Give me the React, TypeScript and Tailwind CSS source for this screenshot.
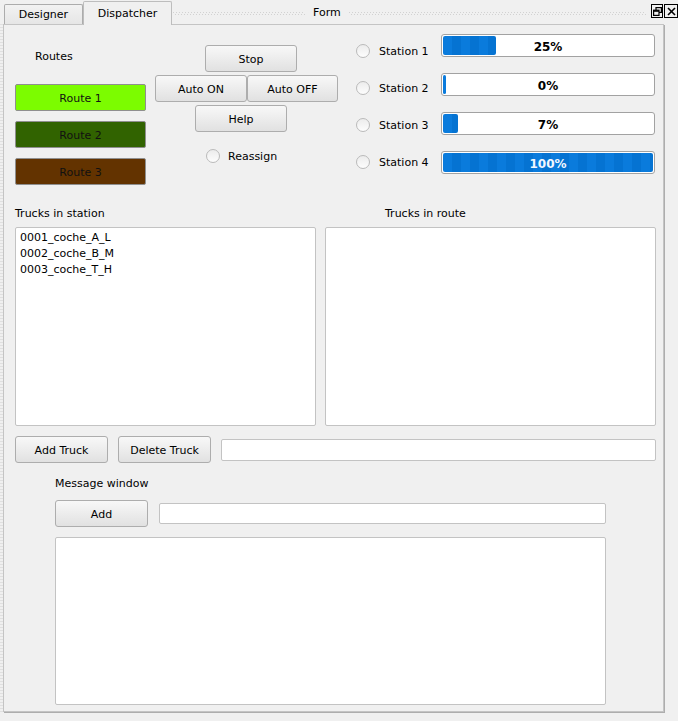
import React from "react";

const btn =
  "flex items-center justify-center pt-[2px] h-[27px] rounded-[3px] border border-[#adadad] bg-linear-to-b from-[#f8f8f8] to-[#e1e1e1] text-black";

const edit = "rounded-[2px] border border-[#c3c3c3] bg-white";

const Radio = () => (
  <span className="inline-block w-[14px] h-[14px] shrink-0 rounded-full border border-[#bababa] bg-linear-to-b from-[#ececec] to-[#fdfdfd]" />
);

const routes = [
  { name: "Route 1", cls: "bg-[#7cfc00]" },
  { name: "Route 2", cls: "bg-[#316300]" },
  { name: "Route 3", cls: "bg-[#633300]" },
];

const stations = [
  { name: "Station 1", pct: 25 },
  { name: "Station 2", pct: 0 },
  { name: "Station 3", pct: 7 },
  { name: "Station 4", pct: 100 },
];

const trucks = ["0001_coche_A_L", "0002_coche_B_M", "0003_coche_T_H"];

const Grip = ({ className }: { className: string }) => (
  <div className={"flex flex-col gap-px " + className}>
    <div className="h-px bg-[repeating-linear-gradient(90deg,#d2d2d2_0px,#d2d2d2_1px,transparent_1px,transparent_3px)]" />
    <div className="h-px bg-[repeating-linear-gradient(90deg,transparent_0px,transparent_2px,#d2d2d2_2px,#d2d2d2_3px)]" />
  </div>
);

const Progress = ({ pct }: { pct: number }) => {
  const w = Math.max(3, Math.round((pct * 210) / 100));
  return (
    <div className="relative w-[214px] h-[23px] rounded-[3px] border border-[#a2a2a2] bg-white p-px">
      <div
        className="h-full rounded-[2px] bg-[repeating-linear-gradient(90deg,#0a7bdc_0px,#0a7bdc_9px,#0573d2_9px,#0573d2_18px)]"
        style={{ width: w }}
      />
      <div
        className={
          "absolute inset-0 flex items-center justify-center pt-[2px] text-[12px] font-bold " +
          (pct === 100 ? "text-[#f2f7ff]" : "text-black")
        }
      >
        {pct}%
      </div>
    </div>
  );
};

export default function App() {
  return (
    <div className="w-[678px] h-[721px] bg-[#f0f0f0] text-black text-[11px] leading-[16px] font-['DejaVu_Sans',sans-serif] overflow-hidden">
      {/* tab bar + dock title */}
      <div className="flex h-[24px] items-end">
        <div className="w-[4px]" />
        <div className="h-[20px] w-[79px] flex items-center justify-center pt-px rounded-t-[2px] border border-b-0 border-[#acacac] bg-linear-to-b from-[#f2f2f2] to-[#e6e6e6]">
          Designer
        </div>
        <div className="relative z-10 -mb-px h-[24px] w-[89px] flex items-center justify-center rounded-t-[2px] border border-b-0 border-[#bdbdbd] bg-[#f0f0f0]">
          Dispatcher
        </div>
        <div className="flex-1 h-full flex items-center pl-[1px] pt-[2px]">
          <Grip className="w-[132px]" />
          <span className="px-[8px]">Form</span>
          <Grip className="flex-1" />
          <div className="w-[5px]" />
          <div className="flex self-start mt-[2px] gap-px">
            <div className="w-[12px] h-[14px] border border-black flex items-center justify-center">
              <svg width="9" height="9" viewBox="0 0 9 9" fill="none" stroke="black" strokeWidth="1.2">
                <rect x="3" y="0.6" width="5.4" height="4.8" />
                <rect x="0.6" y="3.2" width="5.4" height="5.2" fill="#f0f0f0" />
                <line x1="0.6" y1="4" x2="6" y2="4" strokeWidth="1.6" />
              </svg>
            </div>
            <div className="w-[14px] h-[14px] border border-black flex items-center justify-center">
              <svg width="9" height="9" viewBox="0 0 9 9" stroke="black" strokeWidth="1.6">
                <line x1="1" y1="1" x2="8" y2="8" />
                <line x1="8" y1="1" x2="1" y2="8" />
              </svg>
            </div>
          </div>
        </div>
      </div>

      <div className="flex">
        <div className="w-[3px] h-[688px] bg-[repeating-linear-gradient(180deg,#e0e0e0_0px,#e0e0e0_1px,transparent_1px,transparent_3px)]" />
        {/* panel */}
        <div className="w-[661px] h-[688px] border border-[#c4c4c4] shadow-[1px_1px_0_#adadad] pl-[11px]">
          {/* top section */}
          <div className="flex items-start">
            <div className="w-[131px] mt-[23px]">
              <div className="pl-[20px] pt-px h-[16px]">Routes</div>
              <div className="mt-[20px] flex flex-col gap-[10px]">
                {routes.map((r) => (
                  <div
                    key={r.name}
                    className={
                      "h-[27px] flex items-center justify-center pt-[2px] rounded-[2px] border border-[#8f8f8f] text-[#111] " +
                      r.cls
                    }
                  >
                    {r.name}
                  </div>
                ))}
              </div>
            </div>

            <div className="ml-[9px] w-[183px] mt-[20px]">
              <div className={btn + " ml-[50px] w-[92px]"}>Stop</div>
              <div className="mt-[3px] flex">
                <div className={btn + " w-[92px]"}>Auto ON</div>
                <div className={btn + " w-[91px]"}>Auto OFF</div>
              </div>
              <div className={btn + " mt-[3px] ml-[40px] w-[92px]"}>Help</div>
              <div className="mt-[16px] ml-[51px] h-[15px] flex items-center gap-[8px]">
                <Radio />
                <span className="pt-[2px]">Reassign</span>
              </div>
            </div>

            <div className="ml-[18px] mt-[9px] flex">
              <div className="w-[85px] pt-[9px] flex flex-col gap-[21px]">
                {stations.map((s) => (
                  <div key={s.name} className="h-[16px] flex items-center">
                    <Radio />
                    <span className="ml-[9px] pt-px">{s.name}</span>
                  </div>
                ))}
              </div>
              <div className="flex flex-col gap-[16px]">
                {stations.map((s) => (
                  <Progress key={s.name} pct={s.pct} />
                ))}
              </div>
            </div>
          </div>

          {/* trucks */}
          <div className="mt-[21px] h-[15px] flex">
            <span className="w-[370px]">Trucks in station</span>
            <span>Trucks in route</span>
          </div>
          <div className="mt-[6px] flex gap-[9px]">
            <div className={edit + " w-[301px] h-[199px] pt-[2px] pl-[4px]"}>
              {trucks.map((t) => (
                <div key={t}>{t}</div>
              ))}
            </div>
            <div className={edit + " w-[331px] h-[199px]"} />
          </div>

          <div className="mt-[10px] flex items-center gap-[10px]">
            <div className={btn + " w-[93px]"}>Add Truck</div>
            <div className={btn + " w-[93px]"}>Delete Truck</div>
            <div className={edit + " w-[435px] h-[22px]"} />
          </div>

          {/* messages */}
          <div className="ml-[40px]">
            <div className="mt-[13px] h-[15px]">Message window</div>
            <div className="mt-[9px] flex items-center gap-[11px]">
              <div className={btn + " w-[93px]"}>Add</div>
              <div className={edit + " w-[447px] h-[21px]"} />
            </div>
            <div className={edit + " mt-[10px] w-[551px] h-[168px]"} />
          </div>
        </div>
      </div>
    </div>
  );
}
